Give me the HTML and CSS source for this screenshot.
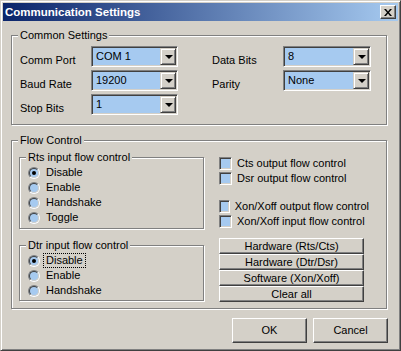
FILE: index.html
```html
<!DOCTYPE html>
<html lang="en">
<head>
    <meta charset="UTF-8">
    <title>Communication Settings</title>
    <link rel="stylesheet" href="styles.css">
</head>
<body>
    <div class="window">
        <div class="titlebar">
            <span class="title">Communication Settings</span>
            <span class="close-btn">
                <svg width="8" height="7" viewBox="0 0 8 7">
                    <path d="M0 0h2l2 2.5L6 0h2L5 3.5 8 7H6L4 4.5 2 7H0l3-3.5z" fill="#000"/>
                </svg>
            </span>
        </div>

        <div class="client">
            <!-- Common settings -->
            <div class="group common">
                <div class="group-title">Common Settings</div>
                <div class="settings-grid">
                    <span class="field-label">Comm Port</span>
                    <div class="combo"><span class="combo-text">COM 1</span><span class="combo-btn"><i class="arrow"></i></span></div>
                    <span class="field-label">Data Bits</span>
                    <div class="combo wide"><span class="combo-text">8</span><span class="combo-btn"><i class="arrow"></i></span></div>

                    <span class="field-label">Baud Rate</span>
                    <div class="combo"><span class="combo-text">19200</span><span class="combo-btn"><i class="arrow"></i></span></div>
                    <span class="field-label">Parity</span>
                    <div class="combo wide"><span class="combo-text">None</span><span class="combo-btn"><i class="arrow"></i></span></div>

                    <span class="field-label">Stop Bits</span>
                    <div class="combo"><span class="combo-text">1</span><span class="combo-btn"><i class="arrow"></i></span></div>
                </div>
            </div>

            <!-- Flow control -->
            <div class="group flow">
                <div class="group-title">Flow Control</div>
                <div class="flow-body">
                    <div class="flow-left">
                        <div class="group sub rts">
                            <div class="group-title">Rts input flow control</div>
                            <div class="option-list">
                                <div class="option"><span class="radio checked"></span><span class="option-text">Disable</span></div>
                                <div class="option"><span class="radio"></span><span class="option-text">Enable</span></div>
                                <div class="option"><span class="radio"></span><span class="option-text">Handshake</span></div>
                                <div class="option"><span class="radio"></span><span class="option-text">Toggle</span></div>
                            </div>
                        </div>
                        <div class="group sub dtr">
                            <div class="group-title">Dtr input flow control</div>
                            <div class="option-list">
                                <div class="option"><span class="radio checked"></span><span class="option-text focused">Disable</span></div>
                                <div class="option"><span class="radio"></span><span class="option-text">Enable</span></div>
                                <div class="option"><span class="radio"></span><span class="option-text">Handshake</span></div>
                            </div>
                        </div>
                    </div>

                    <div class="flow-right">
                        <div class="check-list">
                            <div class="check-row"><span class="checkbox"></span><span class="check-text">Cts output flow control</span></div>
                            <div class="check-row"><span class="checkbox"></span><span class="check-text">Dsr output flow control</span></div>
                        </div>
                        <div class="check-list xon">
                            <div class="check-row"><span class="checkbox"></span><span class="check-text">Xon/Xoff output flow control</span></div>
                            <div class="check-row"><span class="checkbox"></span><span class="check-text">Xon/Xoff input flow control</span></div>
                        </div>
                        <div class="preset-stack">
                            <button class="btn preset">Hardware (Rts/Cts)</button>
                            <button class="btn preset">Hardware (Dtr/Dsr)</button>
                            <button class="btn preset">Software (Xon/Xoff)</button>
                            <button class="btn preset">Clear all</button>
                        </div>
                    </div>
                </div>
            </div>

            <div class="dialog-buttons">
                <button class="btn dialog-btn">OK</button>
                <button class="btn dialog-btn">Cancel</button>
            </div>
        </div>
    </div>
</body>
</html>
```

FILE: styles.css
```css
body {
    margin: 0;
    background: #d4d0c8;
    font-family: "Liberation Sans", Arial, sans-serif;
    font-size: 11px;
    line-height: 13px;
    color: #000;
}

.window {
    box-sizing: border-box;
    width: 401px;
    height: 351px;
    padding: 2px;
    background: #d4d0c8;
    border: 1px solid;
    border-color: #d4d0c8 #404040 #404040 #d4d0c8;
    box-shadow: inset 1px 1px 0 #fff, inset -1px -1px 0 #808080;
}

/* Title bar */
.titlebar {
    height: 18px;
    display: flex;
    align-items: center;
    justify-content: space-between;
    padding: 0 2px;
    background: linear-gradient(to right, #0a246a, #a6caf0);
}

.title {
    color: #fff;
    font-weight: bold;
    font-size: 11.5px;
}

.close-btn {
    box-sizing: border-box;
    width: 16px;
    height: 14px;
    display: flex;
    align-items: center;
    justify-content: center;
    background: #d4d0c8;
    border: 1px solid;
    border-color: #fff #404040 #404040 #fff;
    box-shadow: inset -1px -1px 0 #808080;
}

.close-btn svg {
    display: block;
}

/* Client area */
.client {
    padding: 14px 0 0 8px;
}

.group {
    box-sizing: border-box;
    border: 1px solid #808080;
    box-shadow: inset 1px 1px 0 #fff, 1px 1px 0 #fff;
}

.group-title {
    display: table;
    margin: -7px 0 0 6px;
    padding: 0 2px;
    background: #d4d0c8;
}

.common {
    width: 376px;
    height: 90px;
}

.settings-grid {
    display: grid;
    grid-template-columns: 71px 121px 71px 88px;
    grid-auto-rows: 21px;
    row-gap: 3px;
    margin: 4px 0 0 8px;
}

.field-label {
    align-self: end;
}

/* Combo boxes */
.combo {
    box-sizing: border-box;
    width: 87px;
    height: 21px;
    display: flex;
    align-items: center;
    justify-content: space-between;
    padding: 2px;
    background: #a6caf0;
    border: 1px solid;
    border-color: #808080 #fff #fff #808080;
    box-shadow: inset 1px 1px 0 #404040, inset -1px -1px 0 #d4d0c8;
}

.combo.wide {
    width: 88px;
}

.combo-text {
    padding-left: 2px;
}

.combo-btn {
    box-sizing: border-box;
    width: 16px;
    height: 17px;
    margin-right: -1px;
    display: flex;
    align-items: center;
    justify-content: center;
    background: #d4d0c8;
    border: 1px solid;
    border-color: #d4d0c8 #404040 #404040 #d4d0c8;
    box-shadow: inset 1px 1px 0 #fff, inset -1px -1px 0 #808080;
}

.arrow {
    width: 0;
    height: 0;
    border-left: 4px solid transparent;
    border-right: 4px solid transparent;
    border-top: 4px solid #000;
    margin-left: 1px;
}

/* Flow control */
.flow {
    width: 376px;
    height: 169px;
    margin-top: 15px;
}

.flow-body {
    display: flex;
    gap: 15px;
    margin: 10px 0 0 7px;
}

.flow-left {
    width: 185px;
}

.rts {
    height: 72px;
}

.dtr {
    height: 56px;
    margin-top: 16px;
}

.option-list {
    margin: 1px 0 0 8px;
}

.option {
    height: 15px;
    display: flex;
    align-items: center;
}

.radio {
    box-sizing: border-box;
    width: 12px;
    height: 12px;
    position: relative;
    display: flex;
    align-items: center;
    justify-content: center;
    border-radius: 50%;
    background: #a6caf0;
    border: 1px solid;
    border-color: #808080 #fff #fff #808080;
}

.radio::before {
    content: "";
    position: absolute;
    inset: 0;
    border-radius: 50%;
    border: 1px solid;
    border-color: #404040 #d4d0c8 #d4d0c8 #404040;
}

.radio.checked::after {
    content: "";
    width: 4px;
    height: 4px;
    border-radius: 50%;
    background: #000;
}

.option-text {
    margin-left: 3px;
    padding: 0 2px;
    border: 1px dotted transparent;
}

.option-text.focused {
    border-color: #000;
}

.flow-right {
    width: 150px;
}

.check-list {
    display: flex;
    flex-direction: column;
    gap: 2px;
}

.check-list.xon {
    margin-top: 15px;
}

.check-row {
    height: 13px;
    display: flex;
    align-items: center;
}

.checkbox {
    box-sizing: border-box;
    width: 13px;
    height: 13px;
    background: #a6caf0;
    border: 1px solid;
    border-color: #808080 #fff #fff #808080;
    box-shadow: inset 1px 1px 0 #404040, inset -1px -1px 0 #d4d0c8;
}

.check-text {
    margin-left: 5px;
    white-space: nowrap;
}

/* Buttons */
.btn {
    box-sizing: border-box;
    margin: 0;
    padding: 0;
    font: inherit;
    color: #000;
    background: #d4d0c8;
    border: 1px solid;
    border-color: #fff #404040 #404040 #fff;
    box-shadow: inset -1px -1px 0 #808080;
}

.preset-stack {
    display: flex;
    flex-direction: column;
    margin-top: 10px;
}

.preset {
    width: 145px;
    height: 16px;
}

.dialog-buttons {
    width: 377px;
    display: flex;
    justify-content: flex-end;
    gap: 6px;
    margin-top: 9px;
}

.dialog-btn {
    width: 75px;
    height: 25px;
}
```
